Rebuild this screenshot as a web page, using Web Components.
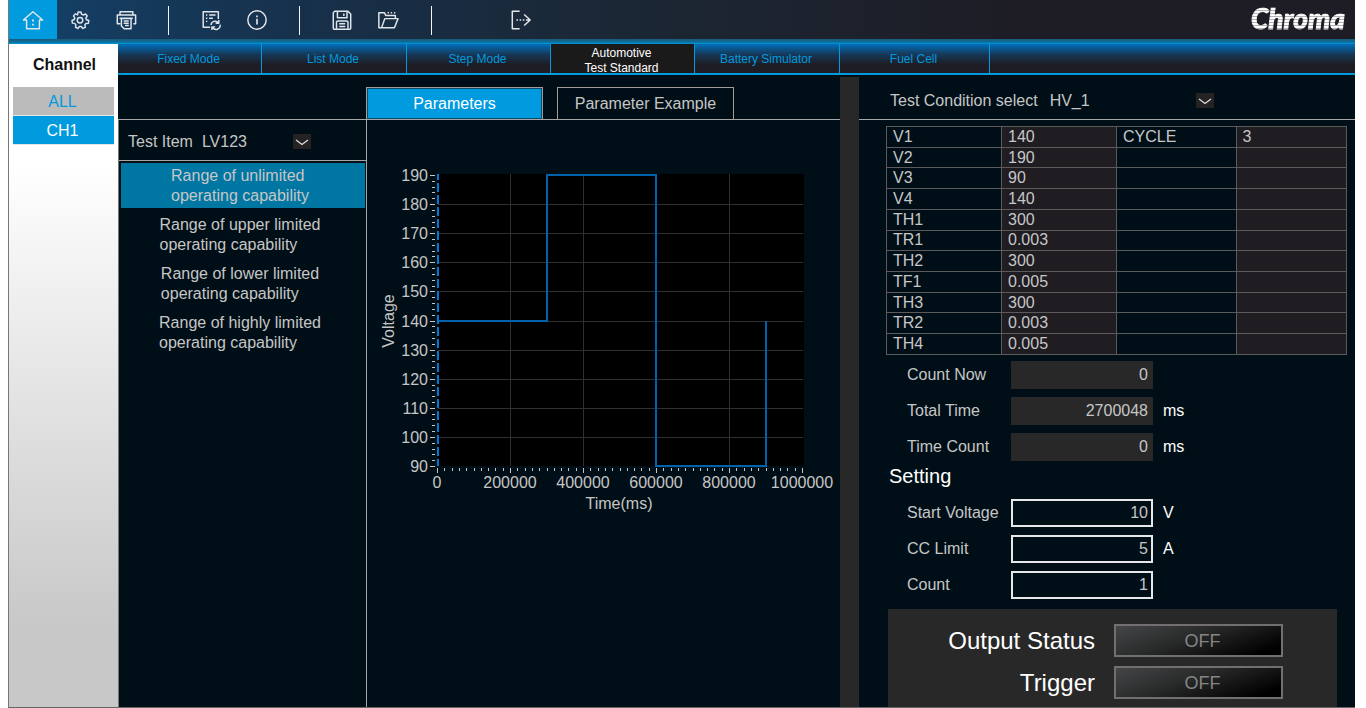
<!DOCTYPE html>
<html lang="en">
<head>
<meta charset="utf-8">
<meta name="viewport" content="width=device-width, initial-scale=1">
<title>Channel Control</title>
<style>
    :root {
        --accent:#009ade;
        --bg:#000f17;
        --panel:#282828;
        --rule:#a6a6a6;
        --text:#c6c6c6;
    }
    body { margin:0; background:#fff; font:16px/20px "Liberation Sans", Arial, sans-serif; color:var(--text); }
</style>
</head>
<body>
<control-app></control-app>
<script>
// ===== TOOL BUTTON =====
const ICONS = {
    home: '<path d="M1.500 12 12 3l10.500 9H19v9.500H5V12z"/><path d="M12 11.500v2M12 16v2" stroke-width="2"/>',
    gear: '<path d="M10 3.200h3l.6 2.300 1.800 1 2.600-1.100 1.900 2.200-1.400 2.200.5 1.900 2.600.9-.4 2.900-2.700.3-1.200 1.500.5 2.700-2.700 1.200-1.700-2.100h-2l-1.700 2.100-2.600-1.300.4-2.600-1.300-1.600-2.500-.3-.4-2.900 2.400-1 .6-1.900L4.900 7.500 6.800 5.300l2.500 1.100z"/><circle cx="12" cy="12.300" r="3"/>',
    print: '<path d="M5.500 6.500V3h14v3.500M6 16H2.500V6.500h20V16h-2.500M5 10h14.500"/><path d="M7 10.500h10.500v11H10l-3-3zM9.500 13h5.500M9.500 15.500h5.500M11 18h4"/>',
    history: '<path d="M20 11V3H3.500v17H11M6.500 6.500H8M10 6.500h7M6.500 10H8M10 10h4M6.500 13.500H8"/><path d="M12 17.500a4.500 4.500 0 0 1 8-2.500M20.500 12v3.500H17M22 17a4.500 4.500 0 0 1-8 3.500M13 23v-3.500h3.500"/>',
    info: '<circle cx="12" cy="12" r="10"/><path d="M12 10.500V17M12 7v2" stroke-width="1.8"/>',
    save: '<path d="M4 2.500h14.500l3 3V21a1 1 0 0 1-1 1H3.500a1 1 0 0 1-1-1V4z"/><path d="M7 3v6.500h10.500V3M14 5v2.500M6 21.500V14l1-1h10.500l1 1v7.500M9 16h6.500M9 19h6.500"/>',
    open: '<path d="M5 20.500H2V4h6l1.500 3H20v3.500M5 20.500l3.500-10H23l-4 10z"/><path d="M11.500 4.200H13M15 4.200h1.500M18.500 4.200H20"/>',
    exit: '<path d="M10.500 2.500h-8v19h8"/><path d="M7 12h1.700M10.500 12h1.700M14 12h1.700M17.500 12H21M15.500 6l6.500 6-6.500 6"/>'
};

customElements.define('tool-button', class extends HTMLElement {
    connectedCallback() {
        this.attachShadow({ mode: 'open' });
        const name = this.getAttribute('icon');
        this.shadowRoot.innerHTML = `
            <style>
                :host { display:flex; width:46px; }
                :host([active]) { width:48px; background:var(--accent); }
                button { flex:1; display:grid; place-items:center; padding:0; border:0; background:none; color:#e2e6ea; cursor:pointer; }
                svg { width:22px; height:22px; display:block; }
            </style>
            <button aria-label="${name}">
                <svg viewBox="0 0 24 24" fill="none" stroke="currentColor" stroke-width="1.6" stroke-linejoin="round">${ICONS[name]}</svg>
            </button>
        `;
    }
});

// ===== TOP BAR =====
customElements.define('top-bar', class extends HTMLElement {
    connectedCallback() {
        this.attachShadow({ mode: 'open' });
        this.shadowRoot.innerHTML = `
            <style>
                :host {
                    display:flex; align-items:stretch; height:39px;
                    background:linear-gradient(90deg, #134169 0%, #17304a 22%, #1b2735 45%, #1e1d25 75%);
                }
                .sep { width:1px; margin:6px 19px 4px; background:#f2f4f5; }
                .wide { margin:6px 66px 4px 20px; }
                .logo {
                    margin:2px 10px 0 auto; font:italic 900 28px/32px Lato, sans-serif; color:transparent;
                    background:repeating-linear-gradient(#fff 0 2px, #b4b4b6 2px 3px); background-clip:text; -webkit-background-clip:text;
                    -webkit-text-stroke:1px transparent;
                }
            </style>
            <tool-button icon="home" active></tool-button>
            <tool-button icon="gear"></tool-button>
            <tool-button icon="print"></tool-button>
            <span class="sep"></span>
            <tool-button icon="history"></tool-button>
            <tool-button icon="info"></tool-button>
            <span class="sep"></span>
            <tool-button icon="save"></tool-button>
            <tool-button icon="open"></tool-button>
            <span class="sep wide"></span>
            <tool-button icon="exit"></tool-button>
            <span class="logo">Chroma</span>
        `;
    }
});

// ===== CHANNELS =====
customElements.define('channel-list', class extends HTMLElement {
    connectedCallback() {
        this.attachShadow({ mode: 'open' });
        this.shadowRoot.innerHTML = `
            <style>
                :host {
                    display:flex; flex-direction:column; padding:11px 4px 0; color:#111;
                    background:linear-gradient(#fff 18%, #ececec 42%, #c8c8c8 88%);
                }
                h2 { margin:0 0 12px; padding-left:2px; font-size:16px; line-height:20px; text-align:center; }
                button {
                    height:29px; padding:1px 2px 0 0; border:0; border-bottom:1px solid #e6e6e6;
                    background:#bbb; color:var(--accent); font:inherit; cursor:pointer;
                }
                .on { background:var(--accent); color:#fff; }
            </style>
            <h2>Channel</h2>
            <button>ALL</button>
            <button class="on">CH1</button>
        `;
    }
});

// ===== MODE TABS =====
customElements.define('mode-tabs', class extends HTMLElement {
    connectedCallback() {
        this.attachShadow({ mode: 'open' });
        this.shadowRoot.innerHTML = `
            <style>
                :host {
                    display:grid; grid-template:29px / 144fr 145fr 144fr 144fr 145fr 150fr 365fr;
                    border-bottom:2px solid var(--accent);
                    background:linear-gradient(#0070ba, #16395a 35%, #1e1d25 70%);
                }
                button {
                    padding:2px 2px 0 0; border:0; border-right:1px solid var(--accent); background:none;
                    color:var(--accent); font:12px/15px "Liberation Sans", Arial, sans-serif; cursor:pointer;
                }
                .on { background:#1b1a1b; color:#fff; }
            </style>
            <button>Fixed Mode</button>
            <button>List Mode</button>
            <button>Step Mode</button>
            <button class="on">Automotive<br>Test Standard</button>
            <button>Battery Simulator</button>
            <button>Fuel Cell</button>
        `;
    }
});

// ===== DROP FIELD =====
customElements.define('drop-field', class extends HTMLElement {
    connectedCallback() {
        this.attachShadow({ mode: 'open' });
        this.shadowRoot.innerHTML = `
            <style>
                :host { display:flex; align-items:center; gap:9px; }
                .box { display:grid; align-items:center; width:var(--box, 109px); }
                select {
                    grid-area:1/1; appearance:none; width:100%; height:24px; padding:0; border:0;
                    background:transparent; color:inherit; font:inherit;
                }
                option { background:var(--panel); }
                svg { grid-area:1/1; justify-self:end; width:18px; height:15px; background:#242222; pointer-events:none; }
            </style>
            <label for="s"><slot></slot></label>
            <span class="box">
                <select id="s"><option>${this.getAttribute('value')}</option></select>
                <svg viewBox="0 0 18 15" fill="none" stroke="#ddd" stroke-width="1.3"><path d="M3 6 9 10.500 15 6"/></svg>
            </span>
        `;
    }
});

// ===== TEST ITEMS =====
customElements.define('test-items', class extends HTMLElement {
    connectedCallback() {
        this.attachShadow({ mode: 'open' });
        this.shadowRoot.innerHTML = `
            <style>
                :host { display:block; border-left:1px solid #777; }
                drop-field { box-sizing:border-box; height:41px; padding:3px 0 0 9px; border-bottom:1px solid var(--rule); }
                .list { display:flex; flex-direction:column; gap:4px; padding:2px 1px 0 2px; }
                button {
                    display:grid; justify-content:center; padding:3px 6px 2px 0; border:0; background:none;
                    color:inherit; font:inherit; text-align:left; cursor:pointer;
                }
                .on { background:#0076a3; }
            </style>
            <drop-field value="LV123">Test Item</drop-field>
            <div class="list">
                <button class="on">Range of unlimited<br>operating capability</button>
                <button>Range of upper limited<br>operating capability</button>
                <button>Range of lower limited<br>operating capability</button>
                <button>Range of highly limited<br>operating capability</button>
            </div>
        `;
    }
});

// ===== PARAMETER TABS =====
customElements.define('param-tabs', class extends HTMLElement {
    connectedCallback() {
        this.attachShadow({ mode: 'open' });
        this.shadowRoot.innerHTML = `
            <style>
                :host { display:flex; gap:14px; padding:12px 0 0 248px; box-sizing:border-box; height:45px; border-bottom:1px solid var(--rule); }
                button {
                    width:177px; padding:1px 0 0; border:1px solid #a39b96; border-bottom:0;
                    background:none; color:inherit; font:inherit; cursor:pointer;
                }
                .on { background:var(--accent); color:#fff; box-shadow:inset 0 0 0 1px #0b4a68; }
            </style>
            <button class="on">Parameters</button>
            <button>Parameter Example</button>
        `;
    }
});

// ===== WAVE CHART =====
customElements.define('wave-chart', class extends HTMLElement {
    connectedCallback() {
        this.attachShadow({ mode: 'open' });
        const x = ms => 70 + Math.round(ms * 365 / 1000000);
        const y = v => 55 + Math.round((190 - v) * 291 / 100);
        let grid = '', ticks = '', labels = '';
        for (let v = 90; v <= 190; v += 2) {
            const major = v % 10 === 0;
            ticks += `<path d="M${major ? 63 : 65} ${y(v)}H68"/>`;
            if (major) {
                labels += `<text x="61" y="${y(v) + 6}" text-anchor="end">${v}</text>`;
                if (v > 90 && v < 190) grid += `<path d="M71 ${y(v)}H436"/>`;
            }
        }
        for (let t = 0; t <= 1000000; t += 20000) {
            const major = t % 200000 === 0;
            ticks += `<path d="M${x(t)} 348v${major ? 5 : 3}"/>`;
            if (major) {
                labels += `<text x="${x(t)}" y="368" text-anchor="middle">${t}</text>`;
                if (t > 0 && t < 1000000) grid += `<path d="M${x(t)} 54V346"/>`;
            }
        }
        const wave = [[0, 140], [300000, 140], [300000, 190], [600000, 190], [600000, 90], [900000, 90], [900000, 140]]
            .map(([t, v]) => `${x(t)},${y(v)}`).join(' ');
        this.shadowRoot.innerHTML = `
            <style>
                :host { display:block; border-left:1px solid var(--rule); }
                svg { display:block; width:100%; }
                text { font-size:16px; fill:var(--text); }
            </style>
            <svg viewBox="0 0 473 400" role="img" aria-label="Voltage over time">
                <rect x="71" y="54" width="366" height="292"/>
                <g fill="none" stroke="#303030" shape-rendering="crispEdges">${grid}</g>
                <g fill="none" stroke="#c6c6c6" shape-rendering="crispEdges">${ticks}</g>
                <polyline points="${wave}" fill="none" stroke="#0062ab" stroke-width="2"/>
                <path d="M71 54V346" stroke="#0078d7" stroke-width="2" stroke-dasharray="9 3" stroke-dashoffset="3"/>
                ${labels}
                <text x="252" y="389" text-anchor="middle">Time(ms)</text>
                <text transform="translate(27 201) rotate(-90)" text-anchor="middle">Voltage</text>
            </svg>
        `;
    }
});

// ===== CONDITION TABLE =====
customElements.define('condition-table', class extends HTMLElement {
    connectedCallback() {
        this.attachShadow({ mode: 'open' });
        const rows = [
            ['V1', '140', 'CYCLE', '3'], ['V2', '190'], ['V3', '90'], ['V4', '140'], ['TH1', '300'], ['TR1', '0.003'],
            ['TH2', '300'], ['TF1', '0.005'], ['TH3', '300'], ['TR2', '0.003'], ['TH4', '0.005']
        ];
        this.shadowRoot.innerHTML = `
            <style>
                :host { display:block; }
                table { width:100%; height:229px; border-collapse:collapse; table-layout:fixed; }
                td { padding:0 6px; border:1px solid #5c5a5a; line-height:18px; }
                td:nth-child(even) { background:#1f1c22; }
                col { width:25%; }
                col:nth-child(3) { width:26%; }
                col:nth-child(4) { width:24%; }
            </style>
            <table>
                <colgroup><col><col><col><col></colgroup>
                <tbody>${rows.map(r => `<tr>${[0, 1, 2, 3].map(i => `<td>${r[i] || ''}</td>`).join('')}</tr>`).join('')}</tbody>
            </table>
        `;
    }
});

// ===== VALUE FIELD =====
customElements.define('value-field', class extends HTMLElement {
    connectedCallback() {
        this.attachShadow({ mode: 'open' });
        const fixed = this.hasAttribute('fixed');
        this.shadowRoot.innerHTML = `
            <style>
                :host { display:grid; grid-template-columns:104px 142px auto; align-items:center; }
                input {
                    box-sizing:border-box; width:100%; height:28px; padding:0 3px 1px; border:2px solid #e8e8e8;
                    background:transparent; color:var(--text); font:inherit; text-align:right;
                }
                input[readonly] { border-color:var(--panel); background:var(--panel); }
                .unit { padding-left:10px; color:#fff; }
            </style>
            <label for="v"><slot></slot></label>
            <input id="v" value="${this.getAttribute('value')}" ${fixed ? 'readonly' : ''}>
            <span class="unit">${this.getAttribute('unit') || ''}</span>
        `;
    }
});

// ===== OUTPUT PANEL =====
customElements.define('output-panel', class extends HTMLElement {
    connectedCallback() {
        this.attachShadow({ mode: 'open' });
        this.shadowRoot.innerHTML = `
            <style>
                :host {
                    display:grid; grid-template-columns:1fr 169px; gap:9px 19px; align-content:start; align-items:center;
                    padding:15px 54px 8px 0; background:var(--panel);
                }
                label { color:#fff; font-size:24px; line-height:28px; text-align:right; }
                button {
                    height:33px; padding:2px 0 0 8px; border:2px solid #716f6f; background:linear-gradient(160deg, #444648, #2a2b2b 40%, #000 90%);
                    color:#858585; font-size:18px; font-family:inherit; cursor:pointer;
                }
            </style>
            <label for="out">Output Status</label>
            <button id="out">OFF</button>
            <label for="trig">Trigger</label>
            <button id="trig">OFF</button>
        `;
    }
});

// ===== CONDITION PANEL =====
customElements.define('condition-panel', class extends HTMLElement {
    connectedCallback() {
        this.attachShadow({ mode: 'open' });
        this.shadowRoot.innerHTML = `
            <style>
                :host { display:flex; flex-direction:column; }
                drop-field { --box:164px; gap:12px; box-sizing:border-box; height:45px; padding:7px 0 0 31px; border-bottom:1px solid var(--rule); }
                condition-table { margin:6px 8px 6px 27px; }
                .fields { display:grid; gap:8px; padding-left:48px; }
                h2 { margin:0 0 0 30px; font-weight:400; font-size:20px; line-height:30px; padding-bottom:8px; color:#fff; }
                output-panel { flex:1; margin:10px 18px 0 29px; }
            </style>
            <drop-field value="HV_1">Test Condition select</drop-field>
            <condition-table></condition-table>
            <div class="fields">
                <value-field value="0" fixed>Count Now</value-field>
                <value-field value="2700048" unit="ms" fixed>Total Time</value-field>
                <value-field value="0" unit="ms" fixed>Time Count</value-field>
            </div>
            <h2>Setting</h2>
            <div class="fields">
                <value-field value="10" unit="V">Start Voltage</value-field>
                <value-field value="5" unit="A">CC Limit</value-field>
                <value-field value="1">Count</value-field>
            </div>
            <output-panel></output-panel>
        `;
    }
});

// ===== APP =====
customElements.define('control-app', class extends HTMLElement {
    connectedCallback() {
        this.attachShadow({ mode: 'open' });
        this.shadowRoot.innerHTML = `
            <style>
                :host {
                    display:flex; flex-direction:column; box-sizing:border-box; min-height:100vh; margin:0 11px 0 8px;
                    border-left:1px solid #777; border-bottom:1px solid #666; background:var(--bg);
                }
                .glow { height:5px; background:linear-gradient(#1b5a78, #0d6f9c 60%, var(--accent)); }
                .body { flex:1; display:grid; grid-template-columns:109px minmax(0, 1fr); }
                .work { display:flex; flex-direction:column; }
                .cols { flex:1; display:grid; grid-template-columns:minmax(0, 722fr) 19px minmax(0, 496fr); }
                .left { display:grid; grid-template:auto 1fr / 248px minmax(0, 1fr); }
                param-tabs { grid-column:1 / -1; }
                .bar { margin-top:2px; background:var(--panel); }
            </style>
            <top-bar></top-bar>
            <div class="glow"></div>
            <div class="body">
                <channel-list></channel-list>
                <div class="work">
                    <mode-tabs></mode-tabs>
                    <div class="cols">
                        <div class="left">
                            <param-tabs></param-tabs>
                            <test-items></test-items>
                            <wave-chart></wave-chart>
                        </div>
                        <div class="bar"></div>
                        <condition-panel></condition-panel>
                    </div>
                </div>
            </div>
        `;
    }
});
</script>
</body>
</html>
